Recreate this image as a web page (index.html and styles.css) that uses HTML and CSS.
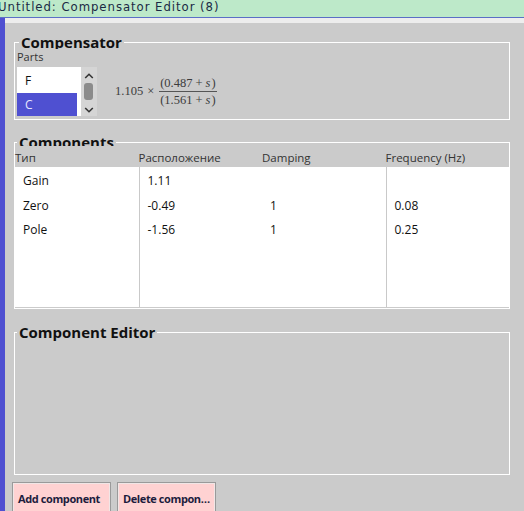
FILE: index.html
```html
<!DOCTYPE html>
<html>
<head>
<meta charset="utf-8">
<link rel="stylesheet" href="styles.css">
</head>
<body>
<div class="titlebar">Untitled: Compensator Editor (8)</div>
<div class="frame">
  <div class="edge"></div>
  <div class="window">
    <div class="topstrip"></div>
    <div class="content">
      <fieldset class="group g-comp">
        <legend>Compensator</legend>
        <div class="parts-label">Parts</div>
        <div class="parts-row">
          <div class="listbox">
            <div class="items">
              <div class="item">F</div>
              <div class="item sel">C</div>
            </div>
            <div class="scroll">
              <svg class="chev" width="10" height="6" viewBox="0 0 10 6"><path d="M1.2 5 L5 1.3 L8.8 5" fill="none" stroke="#333" stroke-width="1.6"/></svg>
              <div class="thumb"></div>
              <svg class="chev down" width="10" height="6" viewBox="0 0 10 6"><path d="M1.2 1 L5 4.7 L8.8 1" fill="none" stroke="#333" stroke-width="1.6"/></svg>
            </div>
          </div>
          <div class="formula">
            <span class="coef">1.105</span><span class="times">×</span>
            <span class="frac">
              <span class="num">(0.487<span class="op">+</span><i>s</i>)</span>
              <span class="den">(1.561<span class="op">+</span><i>s</i>)</span>
            </span>
          </div>
        </div>
      </fieldset>

      <fieldset class="group g-list">
        <legend>Components</legend>
        <div class="thead">
          <div class="th">Тип</div>
          <div class="th">Расположение</div>
          <div class="th">Damping</div>
          <div class="th">Frequency (Hz)</div>
        </div>
        <div class="tbody">
          <div class="td first">Gain</div><div class="td first sep">1.11</div><div class="td first"></div><div class="td first sep"></div>
          <div class="td">Zero</div><div class="td sep">-0.49</div><div class="td">1</div><div class="td sep">0.08</div>
          <div class="td">Pole</div><div class="td sep">-1.56</div><div class="td">1</div><div class="td sep">0.25</div>
          <div class="td fill"></div><div class="td fill sep"></div><div class="td fill"></div><div class="td fill sep"></div>
        </div>
      </fieldset>

      <fieldset class="group g-edit">
        <legend>Component Editor</legend>
        <div class="editor-body"></div>
      </fieldset>

      <div class="buttons">
        <button class="btn">Add component</button>
        <button class="btn">Delete component</button>
      </div>
    </div>
  </div>
</div>
</body>
</html>
```

FILE: styles.css
```css
* { box-sizing: border-box; }
html, body { margin: 0; padding: 0; }
body {
  width: 524px;
  height: 511px;
  overflow: hidden;
  background: #cbcbcb;
  font-family: "Open Sans", "Noto Sans", sans-serif;
  color: #111;
  display: flex;
  flex-direction: column;
}
.titlebar {
  height: 18px;
  flex: none;
  background: #bde9c9;
  border-bottom: 1px solid #5b6fc6;
  font-family: "DejaVu Sans Condensed", "Liberation Sans Narrow", "DejaVu Sans", sans-serif;
  font-size: 13px;
  line-height: 13px;
  letter-spacing: 0.95px;
  color: #1b2945;
  white-space: nowrap;
  overflow: hidden;
  text-indent: -2px;
}
.frame { flex: 1; display: flex; min-height: 0; }
.edge { width: 5px; flex: none; background: #4f50d1; }
.window { flex: 1; display: flex; flex-direction: column; min-width: 0; }
.topstrip { height: 5px; flex: none; background: #ededed; }
.content {
  flex: 1;
  padding: 9px 14px 0 9px;
  display: flex;
  flex-direction: column;
}
.group {
  margin: 0;
  padding: 0;
  border: 1px solid #fff;
  min-width: 0;
}
.group legend {
  font-size: 15px;
  font-weight: 700;
  line-height: 21px;
  height: 21px;
  padding: 0 2px;
  margin-left: 2px;
  color: #111;
}
/* Compensator */
.g-comp { padding: 0 2px 3px 2px; }
.parts-label {
  position: relative;
  margin-top: -4.5px;
  padding-top: 1px;
  font-size: 11px;
  line-height: 14px;
  color: #333;
  background: #cbcbcb;
}
.parts-row {
  margin-top: 3.5px;
  display: flex;
  align-items: center;
}
.listbox {
  width: 80px;
  height: 49px;
  display: flex;
  background: #fff;
  overflow: hidden;
}
.items { flex: 1; padding-top: 2px; }
.item {
  height: 24px;
  line-height: 24px;
  margin-right: 4px;
  padding-left: 8px;
  font-size: 12px;
  color: #111;
}
.item.sel { background: #4f50d1; color: #e6e6ff; }
.scroll {
  width: 16px;
  background: #d5d5d5;
  display: flex;
  flex-direction: column;
  align-items: center;
  padding-top: 6px;
}
.chev { display: block; flex: none; }
.thumb {
  width: 9px;
  height: 17px;
  margin-top: 4px;
  margin-left: -2px;
  background: #8b8b8b;
  border-radius: 3px;
}
.chev.down { margin-top: 7px; }
.formula {
  margin-left: 18px;
  display: flex;
  align-items: center;
  font-family: "Liberation Serif", "DejaVu Serif", serif;
  font-size: 12.5px;
  color: #3c3c3c;
}
.times { margin: 0 4px; }
.frac {
  display: inline-flex;
  flex-direction: column;
  align-items: center;
  margin-left: 1px;
}
.num, .den { line-height: 12px; padding: 0 1px; white-space: nowrap; }
.num { border-bottom: 1px solid #555; padding-bottom: 2px; }
.den { padding-top: 2px; }
.op { margin: 0 3px; }
.frac i { font-style: italic; margin-right: 1px; }

/* Components */
.g-list { margin-top: 12px; padding: 0 0 1px 0; }
.thead {
  position: relative;
  margin-top: -7.3px;
  height: 21.3px;
  padding-top: 4.2px;
  background: #cbcbcb;
  display: grid;
  grid-template-columns: repeat(4, 1fr);
  font-size: 11.5px;
  line-height: 15px;
  color: #333;
}
.tbody {
  height: 140px;
  background: #fff;
  display: grid;
  grid-template-columns: repeat(4, 1fr);
  grid-template-rows: 26.5px 24.5px 24.5px 1fr;
  font-size: 12px;
}
.td {
  line-height: 24.5px;
  padding-left: 8px;
  white-space: nowrap;
}
.td.first { padding-top: 2px; }
.td.sep { border-left: 1px solid #c9c9c9; }

/* Component editor */
.g-edit { margin-top: 13px; }
.editor-body { height: 131px; }

.buttons {
  margin-top: 7px;
  margin-left: -2px;
  display: flex;
  gap: 6px;
}
.btn {
  width: 99px;
  height: 31px;
  flex: none;
  padding: 3.5px 2px 0 5px;
  border: 1px solid #9a9a9a;
  box-shadow: inset 0 0 0 1px #f1e6e6;
  background: #ffd2d2;
  font-family: "Open Sans", "Noto Sans", sans-serif;
  font-size: 11px;
  font-weight: 700;
  letter-spacing: -0.4px;
  line-height: 24px;
  color: #1d1d3d;
  text-align: left;
  white-space: nowrap;
  overflow: hidden;
  text-overflow: ellipsis;
  vertical-align: top;
}
```
